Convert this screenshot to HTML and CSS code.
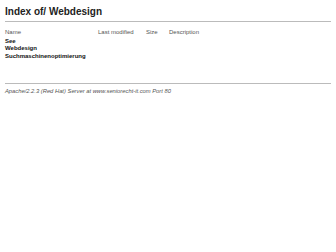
FILE: index.html
```html
<html>
<head>
    <meta charset="UTF-8">
    <title>Index of/ Webdesign</title>
    <link rel="stylesheet" href="styles.css">
</head>
<body>
    <h1>Index of/ Webdesign</h1>
    <hr>
    <table class="listing">
        <tr class="head">
            <td class="name">Name</td>
            <td class="modified">Last modified</td>
            <td class="size">Size</td>
            <td class="desc">Description</td>
        </tr>
        <tr><td class="entry">See</td><td></td><td></td><td></td></tr>
        <tr><td class="entry">Webdesign</td><td></td><td></td><td></td></tr>
        <tr><td class="entry">Suchmaschinenoptimierung</td><td></td><td></td><td></td></tr>
    </table>
    <hr class="bottom">
    <address>Apache/2.2.3 (Red Hat) Server at www.seniorecht-it.com Port 80</address>
</body>
</html>
```

FILE: styles.css
```css
body {
    font-family: "Liberation Sans", Arial, sans-serif;
    background-color: white;
    color: #222;
    margin: 0;
    padding: 6px 5px;
}
h1 {
    font-size: 10px;
    font-weight: bold;
    margin: 0;
    line-height: 11px;
}
hr {
    border: none;
    border-top: 1px solid #bbb;
    margin: 4px 0 0 0;
}
.listing {
    border-collapse: collapse;
    margin-top: 7px;
    font-size: 6px;
}
.listing td {
    padding: 0;
    line-height: 7.5px;
    vertical-align: top;
}
.head td {
    color: #555;
    padding-bottom: 1px;
}
.name {
    width: 93px;
}
.modified {
    width: 48px;
}
.size {
    width: 23px;
}
.entry {
    font-weight: bold;
    color: #111;
}
.bottom {
    margin-top: 23px;
}
address {
    font-size: 5.8px;
    color: #555;
    margin-top: 4px;
}
```
